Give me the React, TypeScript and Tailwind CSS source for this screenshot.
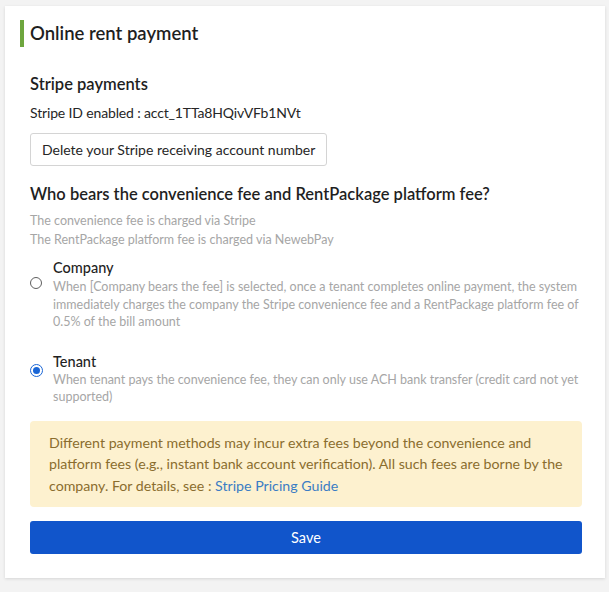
import React from "react";

export default function App() {
  return (
    <div
      className="min-h-screen bg-[#f3f3f3] pt-[6px] pl-[5px]"
      style={{ fontFamily: 'Lato, "Noto Sans", sans-serif' }}
    >
      <div className="w-[600px] bg-white shadow-[0_1px_3px_rgba(0,0,0,0.12)] pb-[24px]">
        <div className="pl-[15px] pt-[14px]">
          <div className="flex items-center border-l-4 border-[#6ea63e] h-[27px] pl-[6px]">
            <h1 className="text-[18.5px] font-semibold text-[#1f1f1f] leading-none">Online rent payment</h1>
          </div>
        </div>
        <div className="pl-[25px] pr-[23px]">
          <h2 className="mt-[25px] text-[16.5px] font-semibold text-[#1f1f1f] leading-[24px]">Stripe payments</h2>
          <p className="mt-[7px] text-[14px] tracking-[-0.15px] text-[#262626] leading-[20px]">Stripe ID enabled : acct_1TTa8HQivVFb1NVt</p>
          <button className="mt-[10px] h-[33px] px-[11px] border border-[#d4d4d4] rounded-[3px] text-[14px] text-[#262626] bg-white">
            Delete your Stripe receiving account number
          </button>
          <h2 className="mt-[16px] text-[16.5px] font-semibold text-[#1f1f1f] leading-[24px]">
            Who bears the convenience fee and RentPackage platform fee?
          </h2>
          <div className="mt-[6px] text-[12.5px] text-[#a6a6a6] leading-[18.5px]">
            <p>The convenience fee is charged via Stripe</p>
            <p>The RentPackage platform fee is charged via NewebPay</p>
          </div>

          <div className="mt-[9px] flex flex-col gap-[21px]">
            <label className="flex items-start">
              <span className="mt-[19px] w-[12px] h-[12px] rounded-full border-[1.5px] border-[#5f5f5f] shrink-0" />
              <span className="ml-[11px] flex flex-col">
                <span className="text-[14.5px] font-medium text-[#1f1f1f] leading-[20px]">Company</span>
                <span className="text-[12.5px] text-[#a6a6a6] leading-[17.5px]">
                  When [Company bears the fee] is selected, once a tenant completes online payment, the system immediately charges the company the Stripe convenience fee and a RentPackage platform fee of 0.5% of the bill amount
                </span>
              </span>
            </label>
            <label className="flex items-start">
              <span className="mt-[12px] w-[13px] h-[13px] rounded-full border-[1.5px] border-[#1a66d6] shrink-0 flex items-center justify-center">
                <span className="w-[7px] h-[7px] rounded-full bg-[#1a66d6]" />
              </span>
              <span className="ml-[10px] flex flex-col">
                <span className="text-[14.5px] font-medium text-[#1f1f1f] leading-[19px]">Tenant</span>
                <span className="text-[12.5px] text-[#a6a6a6] leading-[17.5px]">
                  When tenant pays the convenience fee, they can only use ACH bank transfer (credit card not yet supported)
                </span>
              </span>
            </label>
          </div>

          <div className="mt-[15px] bg-[#fdf1cf] rounded-[4px] px-[19px] py-[11px] text-[14.2px] text-[#8a6d2e] leading-[21.5px]">
            Different payment methods may incur extra fees beyond the convenience and platform fees (e.g., instant bank account verification). All such fees are borne by the company. For details, see : <a className="text-[#3b7dc4]">Stripe Pricing Guide</a>
          </div>

          <button className="mt-[14px] w-full h-[33px] bg-[#1155cb] rounded-[3px] text-white text-[14.5px]">
            Save
          </button>
        </div>
      </div>
    </div>
  );
}
